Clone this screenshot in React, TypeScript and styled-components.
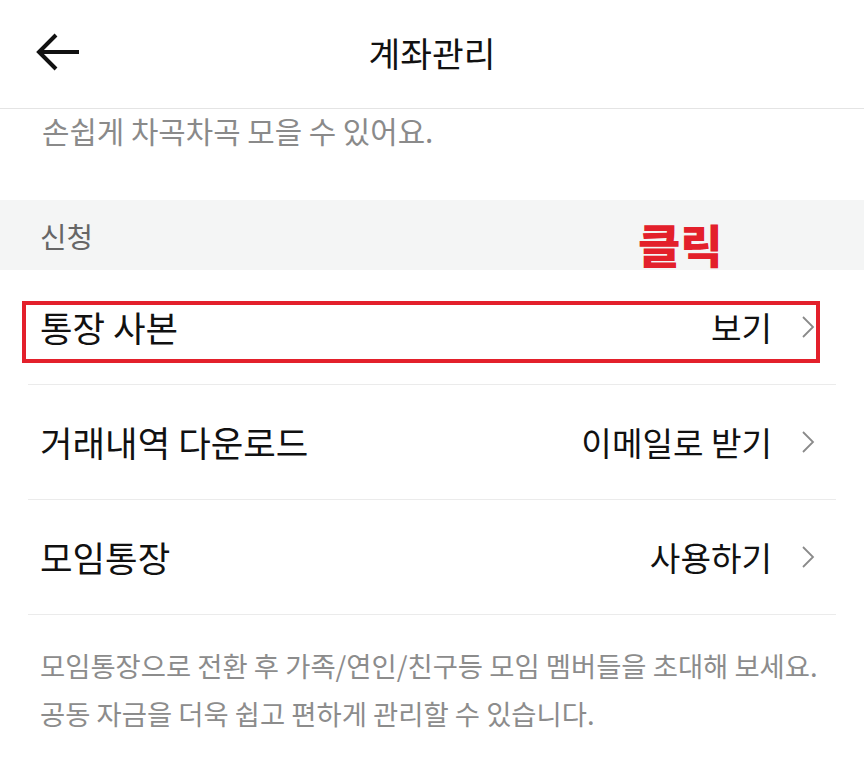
import React from "react";
import styled, { createGlobalStyle } from "styled-components";

const Global = createGlobalStyle`
  html, body { margin: 0; padding: 0; background: #ffffff; }
  body { font-family: "Noto Sans CJK KR", "Noto Sans", sans-serif; color: #111; }
  * { box-sizing: border-box; }
`;

const Page = styled.div`
  width: 864px;
  height: 765px;
  overflow: hidden;
  background: #fff;
  display: flex;
  flex-direction: column;
`;

const Header = styled.header`
  height: 109px;
  flex: none;
  border-bottom: 1px solid #e4e4e4;
  display: grid;
  grid-template-columns: 120px 1fr 120px;
  align-items: center;
  padding-bottom: 4px;
`;

const BackButton = styled.button`
  border: none;
  background: none;
  padding: 0 0 0 35px;
  display: flex;
  align-items: center;
  cursor: pointer;
`;

const Title = styled.h1`
  margin: 0;
  text-align: center;
  font-size: 34.5px;
  font-weight: 400;
  line-height: 44px;
  color: #111;
`;

const Intro = styled.p`
  margin: 0;
  height: 91px;
  flex: none;
  padding: 2px 0 0 42px;
  font-size: 29.8px;
  line-height: 38px;
  color: #8a8a8a;
`;

const SectionHeader = styled.div`
  position: relative;
  height: 70px;
  flex: none;
  background: #f4f5f5;
  display: flex;
  align-items: center;
  padding: 0 0 0 40px;
  font-size: 28.8px;
  color: #666;
`;

const ClickNote = styled.span`
  position: absolute;
  left: 638px;
  top: 11px;
  font-size: 46px;
  font-weight: 900;
  line-height: 64px;
  color: #e3202b;
`;

const List = styled.ul`
  list-style: none;
  margin: 0 28px;
  padding: 0;
`;

const Row = styled.li<{ $highlight?: boolean }>`
  position: relative;
  height: 115px;
  border-bottom: 1px solid #ebebeb;
  display: flex;
  align-items: center;
  justify-content: space-between;
  padding: 0 21px 0 12px;

  ${(p) =>
    p.$highlight &&
    `
    &::after {
      content: "";
      position: absolute;
      left: -6px;
      right: 16px;
      top: 31px;
      height: 54px;
      border: 4px solid #e3202b;
      pointer-events: none;
    }
  `}
`;

const RowLabel = styled.span`
  font-size: 35.4px;
  line-height: 46px;
  color: #111;
`;

const RowAction = styled.span`
  display: flex;
  align-items: center;
  gap: 29px;
  font-size: 33.2px;
  line-height: 46px;
  color: #111;
`;

const Footer = styled.p`
  margin: 0;
  padding: 26px 0 0 40px;
  font-size: 27.4px;
  line-height: 48px;
  color: #8c8c8c;
`;

const BackArrow = () => (
  <svg width="46" height="38" viewBox="0 0 46 38" fill="none">
    <path d="M3 19 H44" stroke="#111" strokeWidth="4" />
    <path d="M21 2 L4 19 L21 36" stroke="#111" strokeWidth="4" strokeLinejoin="miter" />
  </svg>
);

const Chevron = () => (
  <svg width="14" height="24" viewBox="0 0 14 24" fill="none">
    <path d="M2 2 L12 12 L2 22" stroke="#8a8a8a" strokeWidth="1.8" />
  </svg>
);

const rows = [
  { label: "통장 사본", action: "보기", highlight: true },
  { label: "거래내역 다운로드", action: "이메일로 받기" },
  { label: "모임통장", action: "사용하기" },
];

export default function App() {
  return (
    <Page>
      <Global />
      <Header>
        <BackButton aria-label="뒤로">
          <BackArrow />
        </BackButton>
        <Title>계좌관리</Title>
        <span />
      </Header>
      <Intro>손쉽게 차곡차곡 모을 수 있어요.</Intro>
      <SectionHeader>
        신청
        <ClickNote>클릭</ClickNote>
      </SectionHeader>
      <List>
        {rows.map((r) => (
          <Row key={r.label} $highlight={r.highlight}>
            <RowLabel>{r.label}</RowLabel>
            <RowAction>
              {r.action}
              <Chevron />
            </RowAction>
          </Row>
        ))}
      </List>
      <Footer>
        모임통장으로 전환 후 가족/연인/친구등 모임 멤버들을 초대해 보세요.
        <br />
        공동 자금을 더욱 쉽고 편하게 관리할 수 있습니다.
      </Footer>
    </Page>
  );
}
